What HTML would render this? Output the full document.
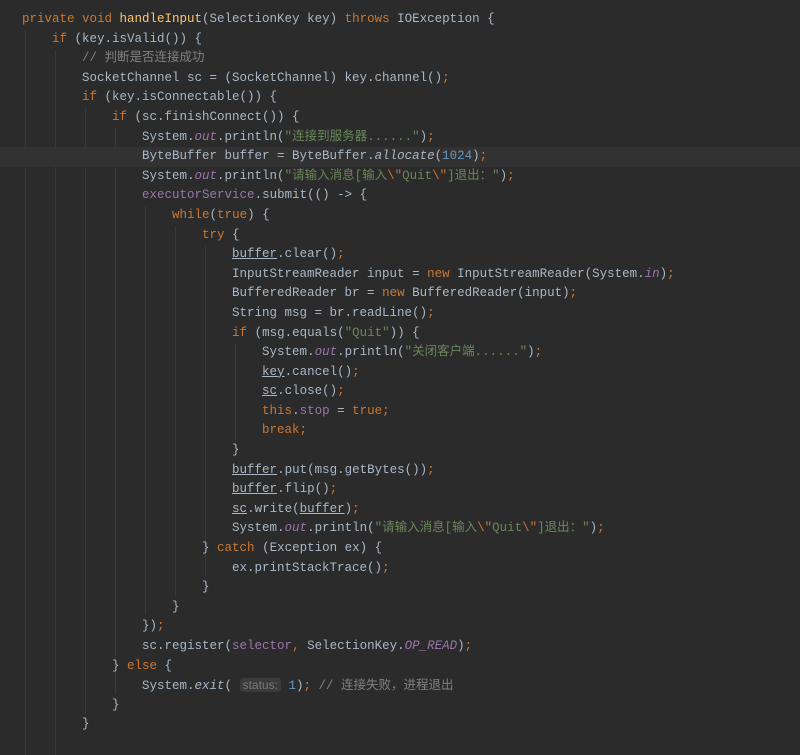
<!DOCTYPE html>
<html><head><meta charset="utf-8"><style>
body{margin:0;background:#2b2b2b;width:800px;height:753px;overflow:hidden;position:relative}
.code{position:absolute;left:0;top:10px;width:800px;font-family:"Liberation Mono","Noto Sans CJK SC",monospace;font-size:12.5px;line-height:19.6px;color:#a9b7c6}
.l{height:19.6px;padding-left:22px;white-space:pre}
.hl{background:#323232}
.k{color:#cc7832}.s{color:#6a8759}.c{color:#808080}.f{color:#9876aa;font-style:italic}.m{color:#ffc66d}.n{color:#6897bb}.p{color:#9876aa}.i{font-style:italic}
.u{text-decoration:underline}
.g{position:absolute;width:1px;background:#393939}
.hint{background:#3b3b3b;color:#787878;font-family:"Liberation Sans",sans-serif;font-size:12px;border-radius:3px;padding:0 3px}
</style></head><body>
<div class="g" style="left:25px;top:30px;height:725px"></div>
<div class="g" style="left:55px;top:50px;height:705px"></div>
<div class="g" style="left:85px;top:108px;height:606px"></div>
<div class="g" style="left:115px;top:128px;height:566px"></div>
<div class="g" style="left:145px;top:206px;height:408px"></div>
<div class="g" style="left:175px;top:226px;height:370px"></div>
<div class="g" style="left:205px;top:246px;height:331px"></div>
<div class="g" style="left:235px;top:344px;height:98px"></div>
<div class="code"><div class="l"><span class="k">private void </span><span class="m">handleInput</span>(SelectionKey key) <span class="k">throws </span>IOException {</div><div class="l">    <span class="k">if </span>(key.isValid()) {</div><div class="l">        <span class="c">// 判断是否连接成功</span></div><div class="l">        SocketChannel sc = (SocketChannel) key.channel()<span class="k">;</span></div><div class="l">        <span class="k">if </span>(key.isConnectable()) {</div><div class="l">            <span class="k">if </span>(sc.finishConnect()) {</div><div class="l">                System.<span class="f">out</span>.println(<span class="s">"连接到服务器......"</span>)<span class="k">;</span></div><div class="l hl">                ByteBuffer buffer = ByteBuffer.<span class="i">allocate</span>(<span class="n">1024</span>)<span class="k">;</span></div><div class="l">                System.<span class="f">out</span>.println(<span class="s">"请输入消息[输入<span class="k">\"</span>Quit<span class="k">\"</span>]退出："</span>)<span class="k">;</span></div><div class="l">                <span class="p">executorService</span>.submit(() -> {</div><div class="l">                    <span class="k">while</span>(<span class="k">true</span>) {</div><div class="l">                        <span class="k">try </span>{</div><div class="l">                            <span class="u">buffer</span>.clear()<span class="k">;</span></div><div class="l">                            InputStreamReader input = <span class="k">new </span>InputStreamReader(System.<span class="f">in</span>)<span class="k">;</span></div><div class="l">                            BufferedReader br = <span class="k">new </span>BufferedReader(input)<span class="k">;</span></div><div class="l">                            String msg = br.readLine()<span class="k">;</span></div><div class="l">                            <span class="k">if </span>(msg.equals(<span class="s">"Quit"</span>)) {</div><div class="l">                                System.<span class="f">out</span>.println(<span class="s">"关闭客户端......"</span>)<span class="k">;</span></div><div class="l">                                <span class="u">key</span>.cancel()<span class="k">;</span></div><div class="l">                                <span class="u">sc</span>.close()<span class="k">;</span></div><div class="l">                                <span class="k">this</span>.<span class="p">stop </span>= <span class="k">true;</span></div><div class="l">                                <span class="k">break;</span></div><div class="l">                            }</div><div class="l">                            <span class="u">buffer</span>.put(msg.getBytes())<span class="k">;</span></div><div class="l">                            <span class="u">buffer</span>.flip()<span class="k">;</span></div><div class="l">                            <span class="u">sc</span>.write(<span class="u">buffer</span>)<span class="k">;</span></div><div class="l">                            System.<span class="f">out</span>.println(<span class="s">"请输入消息[输入<span class="k">\"</span>Quit<span class="k">\"</span>]退出："</span>)<span class="k">;</span></div><div class="l">                        } <span class="k">catch </span>(Exception ex) {</div><div class="l">                            ex.printStackTrace()<span class="k">;</span></div><div class="l">                        }</div><div class="l">                    }</div><div class="l">                })<span class="k">;</span></div><div class="l">                sc.register(<span class="p">selector</span><span class="k">, </span>SelectionKey.<span class="f">OP_READ</span>)<span class="k">;</span></div><div class="l">            } <span class="k">else </span>{</div><div class="l">                System.<span class="i">exit</span>( <span class="hint">status:</span> <span class="n">1</span>)<span class="k">; </span><span class="c">// 连接失败，进程退出</span></div><div class="l">            }</div><div class="l">        }</div></div>
</body></html>
